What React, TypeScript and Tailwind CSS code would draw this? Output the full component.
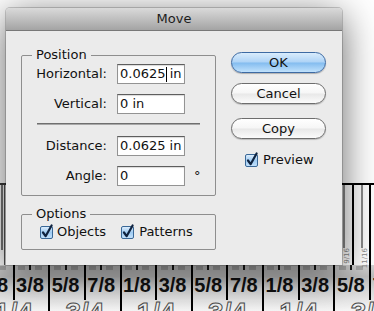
import React from 'react';

const groups = [
  { left: '1/8', right: '3/8', big: '1/4' },
  { left: '5/8', right: '7/8', big: '3/4' },
  { left: '1/8', right: '3/8', big: '1/4' },
  { left: '5/8', right: '7/8', big: '3/4' },
  { left: '1/8', right: '3/8', big: '1/4' },
  { left: '5/8', right: '7/8', big: '3/4' },
];

function CheckBox() {
  return (
    <svg width="13" height="13" viewBox="0 0 13 13" className="shrink-0 overflow-visible">
      <defs>
        <linearGradient id="cbfill" x1="0" y1="0" x2="0" y2="1">
          <stop offset="0" stopColor="#e2f0fd" />
          <stop offset="0.5" stopColor="#9fcbf2" />
          <stop offset="1" stopColor="#c4e2fc" />
        </linearGradient>
      </defs>
      <rect x="0.5" y="0.5" width="12" height="12" rx="1.5" fill="url(#cbfill)" stroke="#3a6897" />
      <path
        d="M3 6.5 L5.6 10.2 L11.6 -0.5"
        fill="none"
        stroke="#0f2340"
        strokeWidth="2.2"
        strokeLinecap="round"
        strokeLinejoin="round"
      />
    </svg>
  );
}

function AquaButton({ label, primary }: { label: string; primary?: boolean }) {
  return (
    <div
      className={
        primary
          ? 'flex h-[21px] w-[95px] items-center justify-center rounded-full border border-[#3d6aa3] bg-[linear-gradient(to_bottom,#d9ecfc_0%,#aed3f6_48%,#83bcef_52%,#c0e1fc_100%)] text-[13px] leading-[16px] text-[#111] shadow-[0_1px_1px_rgba(0,0,0,0.25)]'
          : 'flex h-[21px] w-[95px] items-center justify-center rounded-full border border-[#6d6d6d] bg-[linear-gradient(to_bottom,#ffffff_0%,#f6f6f6_48%,#e8e8e8_52%,#fbfbfb_100%)] text-[13px] leading-[16px] text-[#111] shadow-[0_1px_1px_rgba(0,0,0,0.2)]'
      }
    >
      {label}
    </div>
  );
}

function Field({ label, value, caret, suffix }: { label: string; value: string; caret?: boolean; suffix?: string }) {
  return (
    <div className="flex h-[20px] items-center">
      <span className="w-[85px] text-right text-[13px] leading-[16px]">{label}</span>
      <div className="ml-[10px] flex h-[20px] w-[68px] items-center overflow-hidden border border-[#939393] border-t-[#5e5e5e] bg-white pl-[2px] text-[13px] leading-[16px] shadow-[inset_0_1px_1px_rgba(0,0,0,0.15)]">
        <span className="whitespace-pre">{value}</span>
        {caret && <span className="-mr-px inline-block h-[15px] w-px bg-black" />}
        {suffix && <span className="whitespace-pre">{suffix}</span>}
      </div>
    </div>
  );
}

function RulerCell({ label, line }: { label: string; line?: boolean }) {
  return (
    <div
      className={
        line
          ? 'flex flex-1 flex-col items-center border-l-2 border-black pr-[3px]'
          : 'flex w-[33.6px] shrink-0 flex-col items-center pr-[3px]'
      }
    >
      <div className="flex h-[7px] w-full items-start justify-center gap-[4px]">
        <span className="mt-[1px] h-[4px] w-[7px] bg-[#a9a9a9]" />
        <span className="h-[5px] w-[2px] bg-[#1a1a1a]" />
        <span className="mt-[1px] h-[4px] w-[7px] bg-[#a9a9a9]" />
      </div>
      <span className="mt-[3px] font-['Liberation_Sans',sans-serif] text-[20px] font-bold leading-[20px] text-[#111]">
        {label}
      </span>
    </div>
  );
}

export default function App() {
  return (
    <div className="relative flex h-[311px] w-[374px] flex-col overflow-hidden bg-white font-['DejaVu_Sans',sans-serif] text-[#111]">
      {/* artwork behind the dialog */}
      <div className="flex h-[265px] shrink-0">
        <div className="flex w-[6px] flex-col pt-[183px]">
          <div className="flex flex-1 border-t-2 border-[#3a3a3a]">
            <span className="ml-[1px] h-[65px] w-[2px] bg-[#7a7a7a]" />
            <span className="ml-[1px] w-[1px] bg-[#555]" />
          </div>
        </div>
        <div className="flex-1" />
        <div className="flex w-[32px] flex-col pt-[183px]">
          <div className="flex flex-1 border-t-2 border-black">
            <div className="ml-[1px] flex w-[8px] flex-col items-start">
              <span className="h-[63px] w-[2px] bg-[#8a8a8a]" />
              <span className="rotate-180 text-[7px] leading-[8px] text-[#8a8a8a] [writing-mode:vertical-rl]">9/16</span>
            </div>
            <span className="ml-[1px] w-[2px] bg-black" />
            <div className="ml-[7px] flex w-[7px] flex-col items-start">
              <span className="h-[63px] w-[2px] bg-[#8a8a8a]" />
              <span className="rotate-180 text-[7px] leading-[8px] text-[#8a8a8a] [writing-mode:vertical-rl]">11/16</span>
            </div>
            <span className="ml-[1px] w-[2px] bg-black" />
          </div>
        </div>
      </div>

      <div className="-ml-[23px] flex h-[46px] shrink-0 bg-[linear-gradient(to_bottom,#d4d4d4_0%,#bdbdbd_25%,#d9d9d9_55%,#f6f6f6_100%)]">
        {groups.map((g, i) => (
          <div key={i} className="flex w-[71.3px] shrink-0 flex-col border-l-2 border-black">
            <div className="flex h-[35px]">
              <RulerCell label={g.left} />
              <RulerCell label={g.right} line />
            </div>
            <div className="flex flex-1 justify-center overflow-hidden">
              <span className="-mt-[1px] font-['Liberation_Sans',sans-serif] text-[28px] font-bold leading-none text-[#f0f0f0] [-webkit-text-stroke:1px_#4a4a4a]">
                {g.big}
              </span>
            </div>
          </div>
        ))}
      </div>

      {/* Move dialog */}
      <div className="absolute left-[6px] top-[8px] flex h-[257px] w-[336px] flex-col rounded-t-[4px] bg-[#ebebeb] shadow-[0_0_0_1px_rgba(0,0,0,0.18),0_8px_38px_rgba(0,0,0,0.62)]">
        <div className="flex h-[23px] shrink-0 items-center justify-center rounded-t-[4px] border-b border-[#787878] bg-[linear-gradient(to_bottom,#dadada,#a4a4a4)] text-[13px] leading-[16px] text-[#1c1c1c]">
          Move
        </div>

        <div className="flex pl-[15px] pt-[16px]">
          <div className="flex w-[195px] flex-col">
            <fieldset className="rounded-[2px] border border-[#8e8e8e]">
              <legend className="ml-[10px] px-[4px] text-[13px] leading-[16px]">Position</legend>
              <div className="flex flex-col pb-[9px] pt-[1px]">
                <Field label="Horizontal:" value="0.0625" caret suffix=" in" />
                <div className="mt-[10px]">
                  <Field label="Vertical:" value="0 in" />
                </div>
                <div className="ml-[15px] mt-[9px] h-[2px] w-[163px] border-t border-[#6f6f6f] bg-[#a8a8a8]" />
                <div className="mt-[11px]">
                  <Field label="Distance:" value="0.0625 in" />
                </div>
                <div className="mt-[10px] flex items-center">
                  <Field label="Angle:" value="0" />
                  <span className="ml-[9px] text-[13px] leading-[16px]">°</span>
                </div>
              </div>
            </fieldset>

            <fieldset className="mt-[10px] rounded-[2px] border border-[#8e8e8e]">
              <legend className="ml-[10px] px-[4px] text-[13px] leading-[16px]">Options</legend>
              <div className="flex h-[27px] items-start pl-[18px] pt-[2px]">
                <div className="flex h-[16px] items-center gap-[4px]">
                  <CheckBox />
                  <span className="text-[13px] leading-[16px]">Objects</span>
                </div>
                <div className="ml-[15px] flex h-[16px] items-center gap-[5px]">
                  <CheckBox />
                  <span className="text-[13px] leading-[16px]">Patterns</span>
                </div>
              </div>
            </fieldset>
          </div>

          <div className="ml-[15px] flex w-[95px] flex-col pt-[5px]">
            <AquaButton label="OK" primary />
            <div className="mt-[10px]">
              <AquaButton label="Cancel" />
            </div>
            <div className="mt-[14px]">
              <AquaButton label="Copy" />
            </div>
            <div className="ml-[14px] mt-[14px] flex h-[14px] items-center gap-[5px]">
              <CheckBox />
              <span className="text-[13px] leading-[16px]">Preview</span>
            </div>
          </div>
        </div>
      </div>
    </div>
  );
}
